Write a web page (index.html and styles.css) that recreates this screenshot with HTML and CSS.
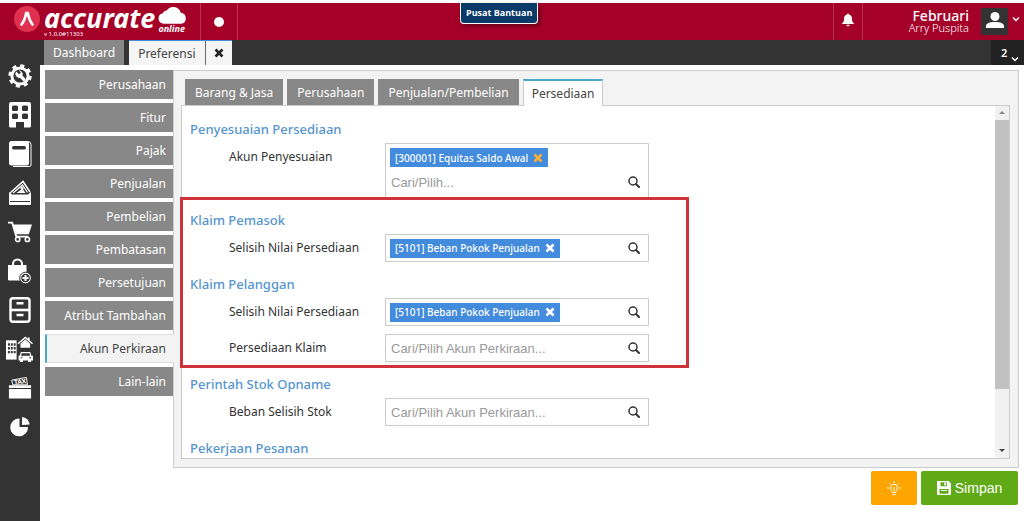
FILE: index.html
```html
<!DOCTYPE html>
<html lang="id">
<head>
  <meta charset="UTF-8" />
  <meta name="viewport" content="width=device-width, initial-scale=1.0"/>
  <title>Accurate Online - Preferensi</title>
  <link rel="stylesheet" href="styles.css">
</head>
<body>

  <!-- shared icons -->
  <svg class="sprite" aria-hidden="true">
    <symbol id="icon-search" viewBox="0 0 12 12">
      <circle cx="5" cy="5" r="4" fill="none" stroke="currentColor" stroke-width="1.5"/>
      <path d="M8 8 11 11" stroke="currentColor" stroke-width="2" stroke-linecap="round"/>
    </symbol>
    <symbol id="icon-close" viewBox="0 0 10 10">
      <path d="M1.5 1.5 8.5 8.5M8.5 1.5 1.5 8.5" stroke="currentColor" stroke-width="2.6"/>
    </symbol>
    <symbol id="icon-chevron" viewBox="0 0 8 6">
      <path d="M1 1.5 4 4.5 7 1.5" fill="none" stroke="currentColor" stroke-width="1.4"/>
    </symbol>
  </svg>

  <!-- HEADER -->
  <header class="header">
    <a class="logo" href="#">
      <svg class="logo-mark" viewBox="0 0 26 26" aria-hidden="true">
        <circle cx="13" cy="13" r="13" fill="#e0304f"/>
        <path d="M7.5 18.5Q11 14 12.2 7h1.6q1.2 7 4.7 11.500" fill="none" stroke="#fff" stroke-width="2.6" stroke-linecap="round"/>
      </svg>
      <span class="logo-text">
        <span class="logo-name">accurate</span>
        <span class="logo-version">v 1.0.0#11303</span>
      </span>
      <span class="logo-cloud">
        <svg viewBox="0 0 30 18" aria-hidden="true">
          <path d="M6 18a5.500 5.500 0 0 1-1-10.900A4 4 0 0 1 9 4.300 8 8 0 0 1 23.500 6.800 5.700 5.700 0 0 1 24.500 18Z" fill="#fff"/>
        </svg>
        <span>online</span>
      </span>
    </a>
    <button class="header-dot" aria-label="Status"><span></span></button>
    <button class="header-bell" aria-label="Notifikasi">
      <svg viewBox="0 0 14 14" aria-hidden="true">
        <path d="M7 0.500a1 1 0 0 1 1 1C10.500 2 11 4 11 6c0 2.500.8 3.800 2.500 5h-13C2.200 9.800 3 8.500 3 6c0-2 .5-4 3-4.500a1 1 0 0 1 1-1ZM5.400 11.800h3.200a1.600 1.600 0 0 1-3.200 0Z" fill="#fff"/>
      </svg>
    </button>
    <div class="user">
      <div class="user-name">
        <strong>Februari</strong>
        <span>Arry Puspita</span>
      </div>
      <button class="avatar" aria-label="Profil">
        <svg viewBox="0 0 18 16" aria-hidden="true">
          <circle cx="9" cy="4.500" r="4.500" fill="#fff"/>
          <path d="M0 16v-2c0-2.500 3.500-4 9-4s9 1.500 9 4v2Z" fill="#fff"/>
        </svg>
      </button>
      <svg class="user-chevron" aria-hidden="true"><use href="#icon-chevron"/></svg>
    </div>
    <a class="help" href="#">Pusat Bantuan</a>
  </header>

  <div class="app">
    <!-- ICON BAR -->
    <nav class="iconbar">
      <a href="#" aria-label="Pengaturan">
        <svg viewBox="0 0 24 24"><circle cx="12" cy="12" r="9.600" fill="#fff"/><circle cx="12" cy="12" r="10.200" fill="none" stroke="#fff" stroke-width="3" stroke-dasharray="4 4.010"/><circle cx="12" cy="12" r="6.600" fill="#333"/><path d="M8.300 7.600 11 10.300 13 8.600 10.600 6.200A4.400 4.400 0 0 1 14.600 11.800L18 15.200 15.700 17.500 12 13.900A4.400 4.400 0 0 1 7.300 9.500Z" fill="#fff"/></svg>
      </a>
      <a href="#" aria-label="Perusahaan">
        <svg viewBox="0 0 24 26"><path d="M3 0h18a2 2 0 0 1 2 2v22a1.500 1.500 0 0 1-1.500 1.500H16V20h-8v5.500H2.500A1.500 1.500 0 0 1 1 24V2a2 2 0 0 1 2-2Z" fill="#fff"/><rect x="4" y="3.500" width="6" height="5.500" rx="1.500" fill="#333"/><rect x="14" y="3.500" width="6" height="5.500" rx="1.500" fill="#333"/><rect x="4" y="11.500" width="6" height="5.500" rx="1.500" fill="#333"/><rect x="14" y="11.500" width="6" height="5.500" rx="1.500" fill="#333"/></svg>
      </a>
      <a href="#" aria-label="Buku besar">
        <svg viewBox="0 0 24 26"><path d="M3 .5h17a3 3 0 0 1 3 3V24a1.500 1.500 0 0 1-1.500 1.500H5" fill="none" stroke="#fff"/><rect x="1" y="0" width="20" height="24.500" rx="2.500" fill="#fff"/><rect x="4" y="5" width="14" height="3.500" rx="1.700" fill="#333"/></svg>
      </a>
      <a href="#" aria-label="Kas dan bank">
        <svg viewBox="0 0 24 26"><path d="M2 13 15 1.500 22 12" fill="none" stroke="#fff" stroke-width="1.500"/><path d="M5 13 14.500 5 19.500 12.500" fill="none" stroke="#fff" stroke-width="1.200"/><path d="M8.500 13 14.500 8.500 17.500 13Z" fill="#fff"/><circle cx="14" cy="8" r="1.600" fill="#fff"/><path d="M1 12l3 2.500h16l3-2.500v8H1z" fill="#fff"/><path d="M1.500 20v4.500h21V20" fill="#fff" stroke="#fff"/><path d="M2 21.500h20" stroke="#333"/></svg>
      </a>
      <a href="#" aria-label="Penjualan">
        <svg viewBox="0 0 26 24"><path d="M0 1.800h4.500L9 17h13" fill="none" stroke="#fff" stroke-width="2"/><path d="M5.500 4H26l-3.500 10.500H8.500Z" fill="#fff"/><circle cx="10.500" cy="20" r="2.300" fill="#333" stroke="#fff" stroke-width="1.700"/><circle cx="21" cy="20" r="2.300" fill="#333" stroke="#fff" stroke-width="1.700"/></svg>
      </a>
      <a href="#" aria-label="Pembelian">
        <svg viewBox="0 0 24 26"><path d="M5 9V6a4.500 4.500 0 0 1 9 0v3" fill="none" stroke="#fff" stroke-width="2"/><path d="M0 7h18.500v15.500H1a1 1 0 0 1-1-1Z" fill="#fff"/><circle cx="17.500" cy="20" r="5.800" fill="#fff" stroke="#333" stroke-width="1"/><circle cx="17.500" cy="20" r="4.300" fill="#333"/><path d="M17.500 17v6M14.500 20h6" stroke="#fff" stroke-width="2"/></svg>
      </a>
      <a href="#" aria-label="Persediaan">
        <svg viewBox="0 0 24 26"><rect x="2.500" y="1.200" width="19" height="23.600" rx="2.500" fill="none" stroke="#fff" stroke-width="2.400"/><path d="M2 13h20" stroke="#fff" stroke-width="2.600"/><path d="M5.500 4h13v6.500h-13zM5.500 15.500h13V22h-13z" fill="#333"/><path d="M8.500 6.200h7M8.500 18h7" stroke="#fff" stroke-width="2.400"/></svg>
      </a>
      <a href="#" aria-label="Aset tetap">
        <svg class="wide" viewBox="0 0 28 26"><path d="M0 4h11v20H0z" fill="#fff"/><path d="M2 7h2v2.500H2zM5 7h2v2.500H5zM8 7h2v2.500H8zM2 11h2v2.500H2zM5 11h2v2.500H5zM8 11h2v2.500H8zM2 15h2v2.500H2zM5 15h2v2.500H5zM8 15h2v2.500H8z" fill="#333"/><path d="M12.500 7.500 20 1l7.500 6.500" fill="none" stroke="#fff" stroke-width="1.500"/><path d="M15 7.500 20 3l5 4.500v4.300H15zM22.500 1.200h2V4h-2z" fill="#fff"/><path d="M15.500 16h9.500l1.500 4H28v5h-2v2h-3v-2h-5.500v2h-3v-2H13v-5h1Z" fill="#fff"/><path d="M16.300 17.500h8l.8 2.500h-9.600Z" fill="#333"/><path d="M15 21.500h2v1.200h-2zM24 21.500h2v1.200h-2z" fill="#333"/></svg>
      </a>
      <a href="#" aria-label="Pajak">
        <svg viewBox="0 0 26 26"><path d="M4 4.500 20 1.500l1 8H5.200Z" fill="none" stroke="#fff"/><text x="7" y="9.500" class="tax" transform="rotate(-8 7 9.500)">TAX</text><path d="M1 10h24v3H1zM1 14h24v10.500H1z" fill="#fff"/></svg>
      </a>
      <a href="#" aria-label="Laporan">
        <svg viewBox="0 0 24 24"><path d="M11.500 3.500V12H20a8.900 8.900 0 1 1-8.500-8.500Z" fill="#fff"/><path d="M14 2a8 8 0 0 1 7.500 7.500L14 10Z" fill="#fff"/></svg>
      </a>
    </nav>

    <div class="main">
      <!-- PAGE TABS -->
      <div class="page-tabs">
        <button class="page-tab">Dashboard</button>
        <div class="page-tab-open">
          <button class="page-tab">Preferensi</button>
          <button class="page-tab-close" aria-label="Tutup"><svg><use href="#icon-close"/></svg></button>
        </div>
        <button class="tab-count"><span>2</span><svg><use href="#icon-chevron"/></svg></button>
      </div>

      <div class="content">
        <nav class="menu">
          <a href="#">Perusahaan</a>
          <a href="#">Fitur</a>
          <a href="#">Pajak</a>
          <a href="#">Penjualan</a>
          <a href="#">Pembelian</a>
          <a href="#">Pembatasan</a>
          <a href="#">Persetujuan</a>
          <a href="#">Atribut Tambahan</a>
          <a href="#" class="active">Akun Perkiraan</a>
          <a href="#">Lain-lain</a>
        </nav>

        <div class="panel">
          <div class="tabs">
            <button>Barang &amp; Jasa</button>
            <button>Perusahaan</button>
            <button>Penjualan/Pembelian</button>
            <button class="active">Persediaan</button>
          </div>

          <div class="tab-body">
            <form class="form">
              <section>
                <h2>Penyesuaian Persediaan</h2>
                <div class="row">
                  <label for="akunPenyesuaian">Akun Penyesuaian</label>
                  <div class="field stacked">
                    <span class="tag warn">[300001] Equitas Saldo Awal <button type="button" aria-label="Hapus"><svg><use href="#icon-close"/></svg></button></span>
                    <input type="text" id="akunPenyesuaian" placeholder="Cari/Pilih...">
                    <button type="button" class="search" aria-label="Cari"><svg><use href="#icon-search"/></svg></button>
                  </div>
                </div>
              </section>

              <div class="highlight">
                <section>
                  <h2>Klaim Pemasok</h2>
                  <div class="row">
                    <label for="selisihPemasok">Selisih Nilai Persediaan</label>
                    <div class="field">
                      <span class="tag">[5101] Beban Pokok Penjualan <button type="button" aria-label="Hapus"><svg><use href="#icon-close"/></svg></button></span>
                      <input type="text" id="selisihPemasok">
                      <button type="button" class="search" aria-label="Cari"><svg><use href="#icon-search"/></svg></button>
                    </div>
                  </div>
                </section>
                <section>
                  <h2>Klaim Pelanggan</h2>
                  <div class="row">
                    <label for="selisihPelanggan">Selisih Nilai Persediaan</label>
                    <div class="field">
                      <span class="tag">[5101] Beban Pokok Penjualan <button type="button" aria-label="Hapus"><svg><use href="#icon-close"/></svg></button></span>
                      <input type="text" id="selisihPelanggan">
                      <button type="button" class="search" aria-label="Cari"><svg><use href="#icon-search"/></svg></button>
                    </div>
                  </div>
                  <div class="row">
                    <label for="persediaanKlaim">Persediaan Klaim</label>
                    <div class="field">
                      <input type="text" id="persediaanKlaim" placeholder="Cari/Pilih Akun Perkiraan...">
                      <button type="button" class="search" aria-label="Cari"><svg><use href="#icon-search"/></svg></button>
                    </div>
                  </div>
                </section>
              </div>

              <section>
                <h2>Perintah Stok Opname</h2>
                <div class="row">
                  <label for="bebanSelisih">Beban Selisih Stok</label>
                  <div class="field">
                    <input type="text" id="bebanSelisih" placeholder="Cari/Pilih Akun Perkiraan...">
                    <button type="button" class="search" aria-label="Cari"><svg><use href="#icon-search"/></svg></button>
                  </div>
                </div>
              </section>

              <section>
                <h2>Pekerjaan Pesanan</h2>
              </section>
            </form>

            <div class="scrollbar" aria-hidden="true">
              <span class="arrow up"></span>
              <div class="track"><div class="thumb"></div></div>
              <span class="arrow down"></span>
            </div>
          </div>
        </div>
      </div>

      <!-- ACTIONS -->
      <div class="actions">
        <button class="btn-hint" aria-label="Petunjuk">
          <svg viewBox="0 0 14 15" fill="none" stroke="#fff" aria-hidden="true"><path d="M5.300 11.500c0-2-1.800-2.600-1.800-4.700a3.500 3.500 0 0 1 7 0c0 2.100-1.800 2.700-1.800 4.700ZM5.500 13.500h3M7 6v4M7 0v2M0 7h2M12 7h2M2 2l1.400 1.400M12 2l-1.400 1.400"/></svg>
        </button>
        <button class="btn-save">
          <svg viewBox="0 0 14 14" aria-hidden="true"><path d="M1 0h10.500L14 2.500V13a1 1 0 0 1-1 1H1a1 1 0 0 1-1-1V1a1 1 0 0 1 1-1Z" fill="#fff"/><path d="M3.500 1.200h6.300v4H3.500zM2.500 8h9v4.800h-9z" fill="#60a917"/><path d="M7.200 1.500h1.600v3H7.200zM4 9h6v1H4z" fill="#fff"/></svg>
          Simpan
        </button>
      </div>
    </div>
  </div>

</body>
</html>
```
FILE: styles.css
```css
* {
  box-sizing: border-box;
}

body {
  margin: 0;
  min-height: 100vh;
  display: flex;
  flex-direction: column;
  background: #fff;
  font-family: 'Noto Sans', sans-serif;
  font-size: 12px;
  color: #333;
}

button, input {
  font: inherit;
  color: inherit;
  border: none;
  background: none;
  padding: 0;
  margin: 0;
}

button {
  cursor: pointer;
}

a {
  color: inherit;
  text-decoration: none;
}

.sprite {
  position: absolute;
  width: 0;
  height: 0;
}

/* Header */
.header {
  position: relative;
  display: flex;
  height: 40px;
  border-top: 3px solid #fff;
  background: #a50028;
  color: #fff;
}

.logo {
  display: flex;
  width: 200px;
  padding: 3px 0 0 14px;
}

.logo-mark {
  width: 26px;
  height: 26px;
  margin-right: 4px;
}

.logo-text {
  display: flex;
  flex-direction: column;
}

.logo-name {
  font-size: 27px;
  font-weight: bold;
  font-style: italic;
  line-height: 24px;
}

.logo-version {
  font-size: 6px;
  line-height: 8px;
}

.logo-cloud {
  display: flex;
  flex-direction: column;
  margin-left: 3px;
  font-size: 9px;
  font-weight: bold;
  font-style: italic;
  line-height: 10px;
}

.logo-cloud svg {
  width: 29px;
  height: 18px;
}

.header-dot {
  width: 38px;
  border-left: 1px solid #b93450;
  border-right: 1px solid #b93450;
}

.header-dot span {
  display: block;
  width: 10px;
  height: 10px;
  margin: 0 auto;
  border-radius: 50%;
  background: #fff;
}

.header-bell {
  width: 30px;
  margin-left: auto;
  border-left: 1px solid #b93450;
  border-right: 1px solid #b93450;
}

.header-bell svg {
  width: 14px;
  height: 14px;
}

.user {
  display: flex;
  align-items: center;
  justify-content: flex-end;
  width: 161px;
  padding-right: 4px;
}

.user-name {
  display: flex;
  flex-direction: column;
  text-align: right;
  margin-right: 12px;
  font-size: 11px;
  font-weight: 300;
  line-height: 12px;
}

.user-name strong {
  font-size: 14px;
  font-weight: 500;
}

.avatar {
  width: 27px;
  height: 27px;
  background: #333;
}

.avatar svg {
  width: 18px;
  height: 16px;
}

.user-chevron {
  width: 8px;
  height: 6px;
  margin-left: 4px;
  margin-bottom: 6px;
}

/* Help tab hangs over the middle of the header */
.help {
  position: absolute;
  top: 0;
  left: 50%;
  margin-left: -52px;
  padding: 0 5px;
  border: 1px solid #fff;
  border-top: none;
  border-radius: 0 0 4px 4px;
  background: #0a3a6a;
  box-shadow: 2px 2px 4px rgba(0,0,0,0.4);
  font-family: 'Open Sans', sans-serif;
  font-size: 9px;
  font-weight: bold;
  line-height: 20px;
}

.app {
  flex: 1;
  display: flex;
}

/* Icon bar */
.iconbar {
  display: flex;
  flex-direction: column;
  gap: 13px;
  width: 40px;
  padding: 23px 1px 0 0;
  align-items: center;
  background: #333;
}

.iconbar a {
  display: flex;
  height: 26px;
}

.iconbar svg {
  width: 24px;
  height: 26px;
}

.iconbar .wide {
  width: 27px;
}

.tax {
  fill: #fff;
  font-size: 7px;
  font-weight: bold;
}

.main {
  flex: 1;
  display: flex;
  flex-direction: column;
}

/* Page tabs */
.page-tabs {
  display: flex;
  height: 25px;
  padding-left: 4px;
  background: #333;
}

.page-tab {
  padding: 0 9px;
  background: #888;
  color: #fff;
}

.page-tab-open {
  display: flex;
  margin-left: 5px;
  border-top: 1px solid #4a8fd6;
}

.page-tab-open button {
  background: #f5f5f5;
  color: #444;
}

.page-tab-open .page-tab-close {
  display: flex;
  align-items: center;
  justify-content: center;
  width: 27px;
  border-left: 1px solid #666;
  color: #222;
}

.page-tab-close svg {
  width: 10px;
  height: 10px;
}

.tab-count {
  display: flex;
  align-items: center;
  width: 33px;
  margin-left: auto;
  padding-left: 10px;
  gap: 4px;
  background: #222;
  color: #fff;
  font-size: 11px;
  font-weight: 600;
}

.tab-count svg {
  width: 8px;
  height: 6px;
  margin-top: 12px;
}

/* Content */
.content {
  flex: 1;
  display: flex;
  padding: 5px 5px 0;
}

.menu {
  display: flex;
  flex-direction: column;
  gap: 4px;
  width: 128px;
}

.menu a {
  height: 29px;
  padding-right: 7px;
  background: #888;
  color: #fff;
  text-align: right;
  line-height: 30px;
}

.menu .active {
  z-index: 1;
  margin-right: -1px;
  padding-right: 8px;
  border: 1px solid #ddd;
  border-left: 2px solid #4ba8c8;
  border-right: none;
  background: #f3f3f3;
  color: #444;
  line-height: 28px;
}

.panel {
  flex: 1;
  display: flex;
  flex-direction: column;
  padding: 8px 8px 8px 7px;
  border: 1px solid #ccc;
  background: #f3f3f3;
}

.tabs {
  display: flex;
  gap: 4px;
  padding-left: 4px;
}

.tabs button {
  height: 26px;
  padding: 0 10px;
  background: #888;
  color: #fff;
}

.tabs .active {
  z-index: 1;
  margin-bottom: -1px;
  height: 27px;
  padding: 0 8px;
  border: 1px solid #ccc;
  border-top: 2px solid #4ba8c8;
  border-bottom: none;
  background: #fff;
  color: #444;
}

.tab-body {
  flex: 1;
  display: flex;
  border: 1px solid #ccc;
  background: #fff;
}

.form {
  flex: 1;
  padding: 1px 0 0 8px;
}

.form section {
  padding-top: 12px;
}

.form h2 {
  margin: 0;
  color: #5595cf;
  font-size: 13px;
  font-weight: 500;
  line-height: 20px;
}

.row {
  display: flex;
  margin-top: 4px;
  padding-left: 39px;
}

.row + .row {
  margin-top: 8px;
}

.row label {
  width: 156px;
  line-height: 28px;
}

.field {
  display: flex;
  align-items: center;
  width: 264px;
  min-height: 28px;
  padding: 0 8px 0 4px;
  border: 1px solid #ccc;
}

.field input {
  flex: 1;
  min-width: 0;
  height: 26px;
  padding-left: 1px;
  outline: none;
  font-family: 'Liberation Sans', Arial, sans-serif;
  font-size: 13px;
}

.field input::placeholder {
  color: #999;
}

.stacked {
  flex-wrap: wrap;
  padding-top: 4px;
}

.stacked input {
  flex: 1 0 60%;
  height: 30px;
}

.tag {
  display: flex;
  align-items: center;
  gap: 5px;
  height: 19px;
  padding: 0 5px;
  background: #428bdd;
  color: #fff;
  font-size: 10px;
  font-weight: 500;
}

.tag button {
  display: flex;
}

.tag svg {
  width: 10px;
  height: 10px;
}

.warn button {
  color: #fbb034;
}

.search {
  display: flex;
}

.search svg {
  width: 12px;
  height: 12px;
}

/* Red frame around the claim sections */
.highlight {
  position: relative;
}

.highlight::before {
  content: "";
  box-sizing: border-box;
  position: absolute;
  top: -1px;
  left: -10px;
  width: 509px;
  bottom: -6px;
  border: 3px solid #cf333a;
  pointer-events: none;
}

.scrollbar {
  display: flex;
  flex-direction: column;
  width: 14px;
  background: #f1f1f1;
}

.track {
  flex: 1;
}

.thumb {
  height: 83%;
  background: #c1c1c1;
}

.arrow {
  height: 14px;
}

.arrow::before {
  content: "";
  display: block;
  width: 0;
  margin: 5px auto;
  border: 3px solid transparent;
}

.up::before {
  border-top: none;
  border-bottom: 3px solid #888;
}

.down::before {
  border-bottom: none;
  border-top: 3px solid #444;
}

/* Actions */
.actions {
  display: flex;
  justify-content: flex-end;
  gap: 4px;
  padding: 3px 6px 16px;
}

.actions button {
  display: flex;
  align-items: center;
  justify-content: center;
  gap: 4px;
  height: 34px;
  border-radius: 2px;
  color: #fff;
  font-family: 'Liberation Sans', Arial, sans-serif;
  font-size: 14px;
}

.btn-hint {
  width: 46px;
  background: #ffa500;
}

.btn-hint svg {
  width: 14px;
  height: 15px;
}

.btn-save {
  width: 97px;
  background: #60a917;
}

.btn-save svg {
  width: 14px;
  height: 14px;
}
```
